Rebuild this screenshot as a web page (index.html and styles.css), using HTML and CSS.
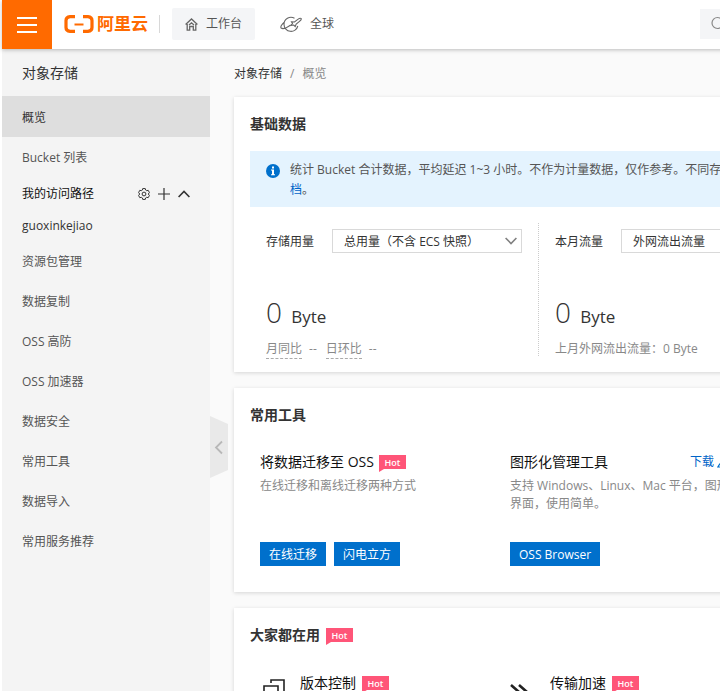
FILE: index.html
```html
<!DOCTYPE html>
<html lang="zh-CN">
<head>
    <meta charset="UTF-8">
    <meta name="viewport" content="width=device-width, initial-scale=1.0">
    <title>对象存储 - 概览</title>
    <link rel="stylesheet" href="styles.css">
</head>
<body>
    <div class="app">
        <header class="topbar">
            <button type="button" class="menu-button" aria-label="菜单">
                <svg width="20" height="16" viewBox="0 0 20 16" stroke="#fff" stroke-width="2"><path d="M0 1h20M0 8h20M0 15h20"/></svg>
            </button>
            <a href="#" class="logo">
                <svg width="30" height="18" viewBox="0 0 30 18" fill="none" stroke="#ff6a00">
                    <path d="M11 1.600H6Q2 2 2 5.500v7q0 3.500 4 3.900h5M19 1.600h5q4 .4 4 3.900v7q0 3.500-4 3.900h-5" stroke-width="3.200"/>
                    <path d="M10.500 9.500h9" stroke-width="2"/>
                </svg>
                <span>阿里云</span>
            </a>
            <span class="topbar-divider"></span>
            <nav class="topnav">
                <a href="#" class="topnav-item active">
                    <svg width="13" height="13" viewBox="0 0 13 13" fill="none" stroke="#666" stroke-width="1.300"><path d="M.6 6.500L6.500 1l5.900 5.500M2.200 6v6.200h2.500V8.500h3.600v3.700h2.500V6M4 7l2.500-2.200L9 7"/></svg>
                    工作台
                </a>
                <a href="#" class="topnav-item">
                    <svg width="22" height="17" viewBox="0 0 22 17" fill="none" stroke="#666" stroke-width="1.100"><path d="M14.500 2.300A7 7 0 0 0 4 8.500a7 7 0 0 0 13.800 1.500M4.500 6C1.500 8.500.2 11 1.200 12c1.500 1.300 6-.5 9.500-3"/><path d="M11.500 5.800l3 .2 3-2.400c1.500-1 3.200-1.500 3.700-1 .4.600-.7 2-2 3l-3 2.400-1 2.500-1.500-1.500-2.700.5 1.500-2z"/></svg>
                    全球
                </a>
            </nav>
            <button type="button" class="search" aria-label="搜索">
                <svg width="16" height="16" viewBox="0 0 16 16" fill="none" stroke="#888" stroke-width="1.200"><circle cx="6.500" cy="7" r="5.500"/><path d="M10.500 11l4 4"/></svg>
            </button>
        </header>

        <div class="layout">
            <aside class="sidebar">
                <h1 class="sidebar-title">对象存储</h1>
                <nav class="sidebar-nav">
                    <a href="#" class="nav-item selected">概览</a>
                    <a href="#" class="nav-item">Bucket 列表</a>
                    <div class="nav-group">
                        <span>我的访问路径</span>
                        <div class="nav-actions">
                            <button type="button" aria-label="设置">
                                <svg width="12" height="12" viewBox="0 0 12 12" fill="none" stroke="#333"><path d="M4.700.6h2.600l.4 1.500 1 .6 1.500-.4 1.200 2.200L10.300 6l1.100 1.500-1.200 2.200-1.500-.4-1 .6-.4 1.500H4.700l-.4-1.500-1-.6-1.500.4L.6 7.500 1.700 6 .6 4.500l1.200-2.200 1.500.4 1-.6z"/><circle cx="6" cy="6" r="1.900"/></svg>
                            </button>
                            <button type="button" aria-label="添加">
                                <svg width="12" height="12" viewBox="0 0 12 12" fill="none" stroke="#333" stroke-width="1.200"><path d="M6 0v12M0 6h12"/></svg>
                            </button>
                            <button type="button" aria-label="收起">
                                <svg width="12" height="12" viewBox="0 0 12 12" fill="none" stroke="#333" stroke-width="1.600"><path d="M.6 9L6 3.500 11.400 9"/></svg>
                            </button>
                        </div>
                    </div>
                    <a href="#" class="nav-item sub">guoxinkejiao</a>
                    <a href="#" class="nav-item">资源包管理</a>
                    <a href="#" class="nav-item">数据复制</a>
                    <a href="#" class="nav-item">OSS 高防</a>
                    <a href="#" class="nav-item">OSS 加速器</a>
                    <a href="#" class="nav-item">数据安全</a>
                    <a href="#" class="nav-item">常用工具</a>
                    <a href="#" class="nav-item">数据导入</a>
                    <a href="#" class="nav-item">常用服务推荐</a>
                </nav>
                <button type="button" class="collapse" aria-label="收起侧栏">
                    <svg width="18" height="62" viewBox="0 0 18 62"><path d="M0 0l18 8v46L0 62z" fill="#e9e9e9"/><path d="M12 25.500L6 31.500l6 6" fill="none" stroke="#b8b8b8" stroke-width="1.800"/></svg>
                </button>
            </aside>

            <main class="content">
                <div class="breadcrumb">
                    <a href="#">对象存储</a><span class="slash">/</span><span>概览</span>
                </div>

                <section class="card">
                    <h2 class="card-title">基础数据</h2>
                    <div class="notice">
                        <svg class="notice-icon" width="14" height="14" viewBox="0 0 14 14"><circle cx="7" cy="7" r="7" fill="#0070cc"/><path d="M6 2.500h2v2H6zM5 5.500h3v4.700h1v1H5v-1h1V6.500H5z" fill="#fff"/></svg>
                        <p>统计 Bucket 合计数据，平均延迟 1~3 小时。不作为计量数据，仅作参考。不同存<br><a href="#">档</a>。</p>
                    </div>
                    <div class="stats">
                        <div class="stat">
                            <div class="stat-head">
                                <label for="storage">存储用量</label>
                                <select id="storage"><option>总用量（不含 ECS 快照）</option></select>
                            </div>
                            <p class="stat-value">0 <small>Byte</small></p>
                            <p class="stat-foot"><span class="hint">月同比</span><span>--</span><span class="hint">日环比</span><span>--</span></p>
                        </div>
                        <div class="stat">
                            <div class="stat-head">
                                <label for="traffic">本月流量</label>
                                <select id="traffic"><option>外网流出流量</option></select>
                            </div>
                            <p class="stat-value">0 <small>Byte</small></p>
                            <p class="stat-foot">上月外网流出流量：0 Byte</p>
                        </div>
                    </div>
                </section>

                <section class="card">
                    <h2 class="card-title">常用工具</h2>
                    <div class="tools">
                        <div class="tool">
                            <h3>将数据迁移至 OSS <span class="hot">Hot</span></h3>
                            <p>在线迁移和离线迁移两种方式</p>
                            <div class="tool-buttons">
                                <button type="button" class="btn">在线迁移</button>
                                <button type="button" class="btn">闪电立方</button>
                            </div>
                        </div>
                        <div class="tool">
                            <h3>图形化管理工具
                                <a href="#" class="download">下载<svg width="13" height="12" viewBox="0 0 13 12" fill="none" stroke="#0070cc" stroke-width="1.200"><path d="M6.500 0v8M3.500 5l3 3 3-3M3 7.500L.8 11h11.400L10 7.500"/></svg></a>
                            </h3>
                            <p>支持 Windows、Linux、Mac 平台，图形化界面，使用简单。</p>
                            <div class="tool-buttons">
                                <button type="button" class="btn">OSS Browser</button>
                            </div>
                        </div>
                    </div>
                </section>

                <section class="card">
                    <h2 class="card-title">大家都在用 <span class="hot">Hot</span></h2>
                    <div class="features">
                        <a href="#" class="feature">
                            <svg width="24" height="24" viewBox="0 0 24 24" fill="none" stroke="#222" stroke-width="1.600"><path d="M8 4V1h13v14h-3M1 7h14v15H1z"/></svg>
                            <span>版本控制</span><span class="hot">Hot</span>
                        </a>
                        <a href="#" class="feature">
                            <svg width="24" height="24" viewBox="0 0 24 24" fill="none" stroke="#222" stroke-width="2.600" overflow="visible"><path d="M-2 6l8 7-8 7M6 6l8 7-8 7"/></svg>
                            <span>传输加速</span><span class="hot">Hot</span>
                        </a>
                    </div>
                </section>
            </main>
        </div>
    </div>
</body>
</html>
```
FILE: styles.css
```css
* {
    box-sizing: border-box;
}
body {
    margin: 0;
    overflow: hidden;
    color: #333;
    background: #fff;
    font-family: "Open Sans", "Noto Sans CJK SC", sans-serif;
    font-size: 12px;
    line-height: 20px;
}
h1, h2, h3, p {
    margin: 0;
}
a {
    color: inherit;
    text-decoration: none;
}
button, select {
    font: inherit;
    color: inherit;
}
button {
    border: 0;
    padding: 0;
    background: none;
    cursor: pointer;
}
svg {
    display: block;
    flex-shrink: 0;
}
.app {
    display: flex;
    flex-direction: column;
    min-width: 1000px;
    height: 100vh;
    padding-left: 2px;
}

/* top bar */
.topbar {
    position: relative;
    z-index: 1;
    display: flex;
    flex-shrink: 0;
    align-items: center;
    height: 49px;
    padding-bottom: 1px;
    background: #fff;
    box-shadow: 0 1px 4px rgba(0, 0, 0, 0.25);
}
.menu-button {
    display: flex;
    align-items: center;
    justify-content: center;
    align-self: flex-start;
    flex-shrink: 0;
    width: 50px;
    height: 49px;
    background: #ff6a00;
}
.logo {
    display: flex;
    align-items: center;
    gap: 3px;
    margin-left: 12px;
    color: #ff6a00;
    font-size: 17px;
    font-weight: 700;
}
.topbar-divider {
    width: 1px;
    height: 18px;
    margin: 0 12px 0 11px;
    background: #d8d8d8;
}
.topnav {
    display: flex;
    gap: 12px;
}
.topnav-item {
    display: flex;
    align-items: center;
    gap: 8px;
    height: 32px;
    padding: 0 13px;
    border-radius: 2px;
    color: #555;
}
.topnav-item.active {
    background: #f4f5f7;
}
.search {
    width: 300px;
    height: 30px;
    margin-left: auto;
    padding-left: 11px;
    background: #f4f5f7;
}

.layout {
    display: flex;
    flex: 1;
    min-height: 0;
}

/* sidebar */
.sidebar {
    position: relative;
    flex: 0 0 208px;
    background: #f4f4f4;
}
.sidebar-title {
    padding: 0 20px;
    font-size: 14px;
    font-weight: 400;
    line-height: 47px;
}
.nav-item {
    display: block;
    padding: 1px 20px 0;
    color: #555;
    line-height: 39px;
}
.nav-item.selected {
    padding-top: 2px;
    color: #333;
    background: #dedede;
}
.nav-item.sub {
    color: #333;
    line-height: 30px;
}
.nav-group {
    display: flex;
    align-items: center;
    justify-content: space-between;
    padding: 0 20px;
    color: #111;
    line-height: 33px;
}
.nav-actions {
    display: flex;
    gap: 8px;
}
.collapse {
    position: absolute;
    top: 367px;
    left: 100%;
}

/* content */
.content {
    flex: 1;
    min-width: 0;
    padding: 15px 24px 0;
    background: #fafafa;
}
.breadcrumb {
    margin-bottom: 13px;
    color: #888;
}
.breadcrumb a {
    color: #333;
}
.slash {
    margin: 0 8px;
}
.card {
    margin-bottom: 16px;
    padding: 16px;
    background: #fff;
    box-shadow: 0 1px 4px rgba(0, 0, 0, 0.15);
}
.card-title {
    display: flex;
    align-items: center;
    gap: 6px;
    margin-bottom: 16px;
    font-size: 14px;
    font-weight: 700;
    line-height: 22px;
}
.notice {
    display: flex;
    gap: 10px;
    margin-bottom: 16px;
    padding: 9px 16px 7px;
    color: #555;
    background: #e4f3fe;
}
.notice-icon {
    margin-top: 4px;
}
.notice a, .download {
    color: #0064c8;
}
.stats {
    display: flex;
}
.stat {
    padding: 6px 16px 0;
    height: 133px;
}
.stat + .stat {
    border-left: 1px dotted #ccc;
}
.stat-head {
    display: flex;
    align-items: center;
    gap: 18px;
}
.stat-head label {
    padding-top: 2px;
}
.stat-head select {
    appearance: none;
    width: 190px;
    height: 24px;
    padding: 1px 11px 0;
    border: 1px solid #d9d9d9;
    border-radius: 0;
    background: #fff url("data:image/svg+xml,%3Csvg xmlns='http://www.w3.org/2000/svg' width='12' height='8' fill='none' stroke='%23808080' stroke-width='1.6'%3E%3Cpath d='M.6 1L6 6.500 11.400 1'/%3E%3C/svg%3E") no-repeat right 4px center;
}
.stat-value {
    margin-top: 39px;
    font-size: 28px;
    font-weight: 300;
    line-height: 40px;
}
.stat-value small {
    margin-left: 2px;
    font-size: 17px;
    font-weight: 400;
}
.stat-foot {
    display: flex;
    gap: 7px;
    margin-top: 3px;
    color: #888;
    line-height: 18px;
}
.hint {
    border-bottom: 1px dashed #aaa;
}
.hint + span {
    margin-right: 2px;
}

.tools, .features {
    display: grid;
    grid-template-columns: repeat(auto-fill, 250px);
}
.tools {
    padding: 8px 0 10px;
}
.tool {
    display: flex;
    flex-direction: column;
    height: 116px;
    padding: 0 4px 0 10px;
}
.tool h3 {
    display: flex;
    align-items: center;
    gap: 5px;
    margin: 2px 0 5px;
    color: #111;
    font-size: 14px;
    font-weight: 400;
    line-height: 20px;
}
.tool p {
    color: #888;
    line-height: 18px;
}
.tool-buttons {
    display: flex;
    gap: 8px;
    margin-top: auto;
}
.btn {
    height: 24px;
    padding: 1px 9px 0;
    color: #fff;
    background: #0070cc;
}
.download {
    display: flex;
    align-items: center;
    gap: 3px;
    margin-left: auto;
    padding-right: 16px;
    font-size: 12px;
}
.hot {
    position: relative;
    width: 27px;
    height: 14px;
    color: #fff;
    background: #ff5578;
    font-size: 9px;
    font-weight: 600;
    line-height: 15px;
    text-align: center;
}
.hot::after {
    content: "";
    position: absolute;
    top: 100%;
    left: 0;
    border-top: 3px solid #ff5578;
    border-right: 5px solid transparent;
}
.features {
    padding-top: 11px;
}
.feature {
    display: flex;
    gap: 6px;
    padding: 0 10px 0 13px;
    color: #111;
    font-size: 14px;
}
.feature svg {
    margin: 6px 7px 0 0;
}
.feature .hot {
    margin-top: 3px;
}
```
